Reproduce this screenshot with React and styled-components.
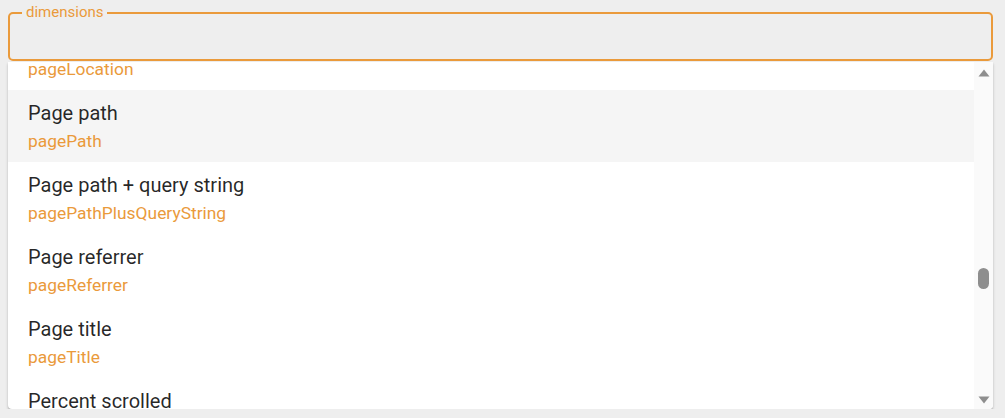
import React, { useLayoutEffect, useRef, useState } from 'react';
import styled, { createGlobalStyle } from 'styled-components';

const orange = '#ea9a3b';

const GlobalStyle = createGlobalStyle`
    html, body {
        margin: 0;
        background: #eeeeee;
        font-family: Roboto, "Noto Sans", sans-serif;
    }
`;

const dimensions = [
    ['Achievement ID', 'achievementId'],
    ['Ad format', 'adFormat'],
    ['Ad source', 'adSourceName'],
    ['Ad unit', 'adUnitName'],
    ['App version', 'appVersion'],
    ['Audience name', 'audienceName'],
    ['Browser', 'browser'],
    ['Campaign', 'campaignName'],
    ['Campaign ID', 'campaignId'],
    ['Character', 'character'],
    ['City', 'city'],
    ['Content group', 'contentGroup'],
    ['Content type', 'contentType'],
    ['Country', 'country'],
    ['Date', 'date'],
    ['Device category', 'deviceCategory'],
    ['Event name', 'eventName'],
    ['First user source', 'firstUserSource'],
    ['Hostname', 'hostName'],
    ['Landing page', 'landingPage'],
    ['Language', 'language'],
    ['Operating system', 'operatingSystem'],
    ['Page location', 'pageLocation'],
    ['Page path', 'pagePath'],
    ['Page path + query string', 'pagePathPlusQueryString'],
    ['Page referrer', 'pageReferrer'],
    ['Page title', 'pageTitle'],
    ['Percent scrolled', 'percentScrolled'],
    ['Platform', 'platform'],
    ['Region', 'region'],
    ['Screen resolution', 'screenResolution'],
    ['Search term', 'searchTerm'],
    ['Session campaign', 'sessionCampaignName'],
    ['Session medium', 'sessionMedium'],
    ['Session source', 'sessionSource'],
    ['Stream name', 'streamName'],
    ['Test data filter name', 'testDataFilterName'],
    ['Transaction ID', 'transactionId'],
    ['Unified screen name', 'unifiedScreenName'],
    ['Video title', 'videoTitle'],
];

const ITEM_HEIGHT = 72;
const FIRST_VISIBLE = 22;
const TRACK_HEIGHT = 309;
const THUMB_HEIGHT = 21;

const StyledWrapper = styled.div`
    padding: 12px 12px 0 8px;
`;

const StyledField = styled.div`
    position: relative;
    height: 49px;
    box-sizing: border-box;
    border: 2px solid ${orange};
    border-radius: 5px;
    background: #eeeeee;
`;

const StyledLabel = styled.span`
    position: absolute;
    top: -10px;
    left: 12px;
    padding: 0 4px;
    background: #eeeeee;
    color: ${orange};
    font-size: 15px;
    line-height: 16px;
`;

const StyledPopup = styled.div`
    display: flex;
    height: 347px;
    margin-top: 1px;
    background: #ffffff;
    border-radius: 0 0 4px 4px;
    box-shadow: 0 2px 3px rgba(0, 0, 0, 0.22), 0 1px 1px rgba(0, 0, 0, 0.1);
    overflow: hidden;
`;

const StyledList = styled.ul`
    flex: 1;
    margin: 0;
    padding: 0;
    list-style: none;
    overflow: hidden;
`;

const StyledItem = styled.li`
    box-sizing: border-box;
    height: ${ITEM_HEIGHT}px;
    padding: 11px 20px 0;
    background: ${({ active }) => (active ? '#f5f5f5' : 'transparent')};
`;

const StyledName = styled.div`
    font-size: 20px;
    line-height: 24px;
    color: rgba(0, 0, 0, 0.85);
`;

const StyledKey = styled.div`
    margin-top: 6px;
    font-size: 17.4px;
    line-height: 20px;
    color: ${orange};
`;

const StyledScrollbar = styled.div`
    display: flex;
    flex-direction: column;
    width: 19px;
    background: #fafafa;
`;

const StyledArrow = styled.div`
    display: flex;
    align-items: center;
    justify-content: center;
    height: ${({ up }) => (up ? 21 : 18)}px;
`;

const StyledTrack = styled.div`
    flex: 1;
`;

const StyledThumb = styled.div`
    width: 11px;
    height: ${THUMB_HEIGHT}px;
    margin-left: 4px;
    border-radius: 6px;
    background: #8e8e8e;
`;

const Arrow = ({ up }) => (
    <StyledArrow up={up}>
        <svg width="12" height="8" viewBox="0 0 12 8">
            <path
                d={up ? 'M6 0.5 L11.5 7.5 L0.5 7.5 Z' : 'M0.5 0.5 L11.5 0.5 L6 7.5 Z'}
                fill="#8e8e8e"
            />
        </svg>
    </StyledArrow>
);

const App = () => {
    const listRef = useRef(null);
    const [thumbTop, setThumbTop] = useState(0);

    useLayoutEffect(() => {
        const list = listRef.current;
        list.scrollTop = FIRST_VISIBLE * ITEM_HEIGHT + 44;
        const max = list.scrollHeight - list.clientHeight;
        setThumbTop((list.scrollTop / max) * (TRACK_HEIGHT - THUMB_HEIGHT));
    }, []);

    return (
        <>
            <GlobalStyle />
            <StyledWrapper>
                <StyledField>
                    <StyledLabel>dimensions</StyledLabel>
                </StyledField>
                <StyledPopup>
                    <StyledList ref={listRef}>
                        {dimensions.map(([name, key]) => (
                            <StyledItem key={key} active={key === 'pagePath'}>
                                <StyledName>{name}</StyledName>
                                <StyledKey>{key}</StyledKey>
                            </StyledItem>
                        ))}
                    </StyledList>
                    <StyledScrollbar>
                        <Arrow up />
                        <StyledTrack>
                            <StyledThumb style={{ marginTop: thumbTop }} />
                        </StyledTrack>
                        <Arrow />
                    </StyledScrollbar>
                </StyledPopup>
            </StyledWrapper>
        </>
    );
};

export default App;
